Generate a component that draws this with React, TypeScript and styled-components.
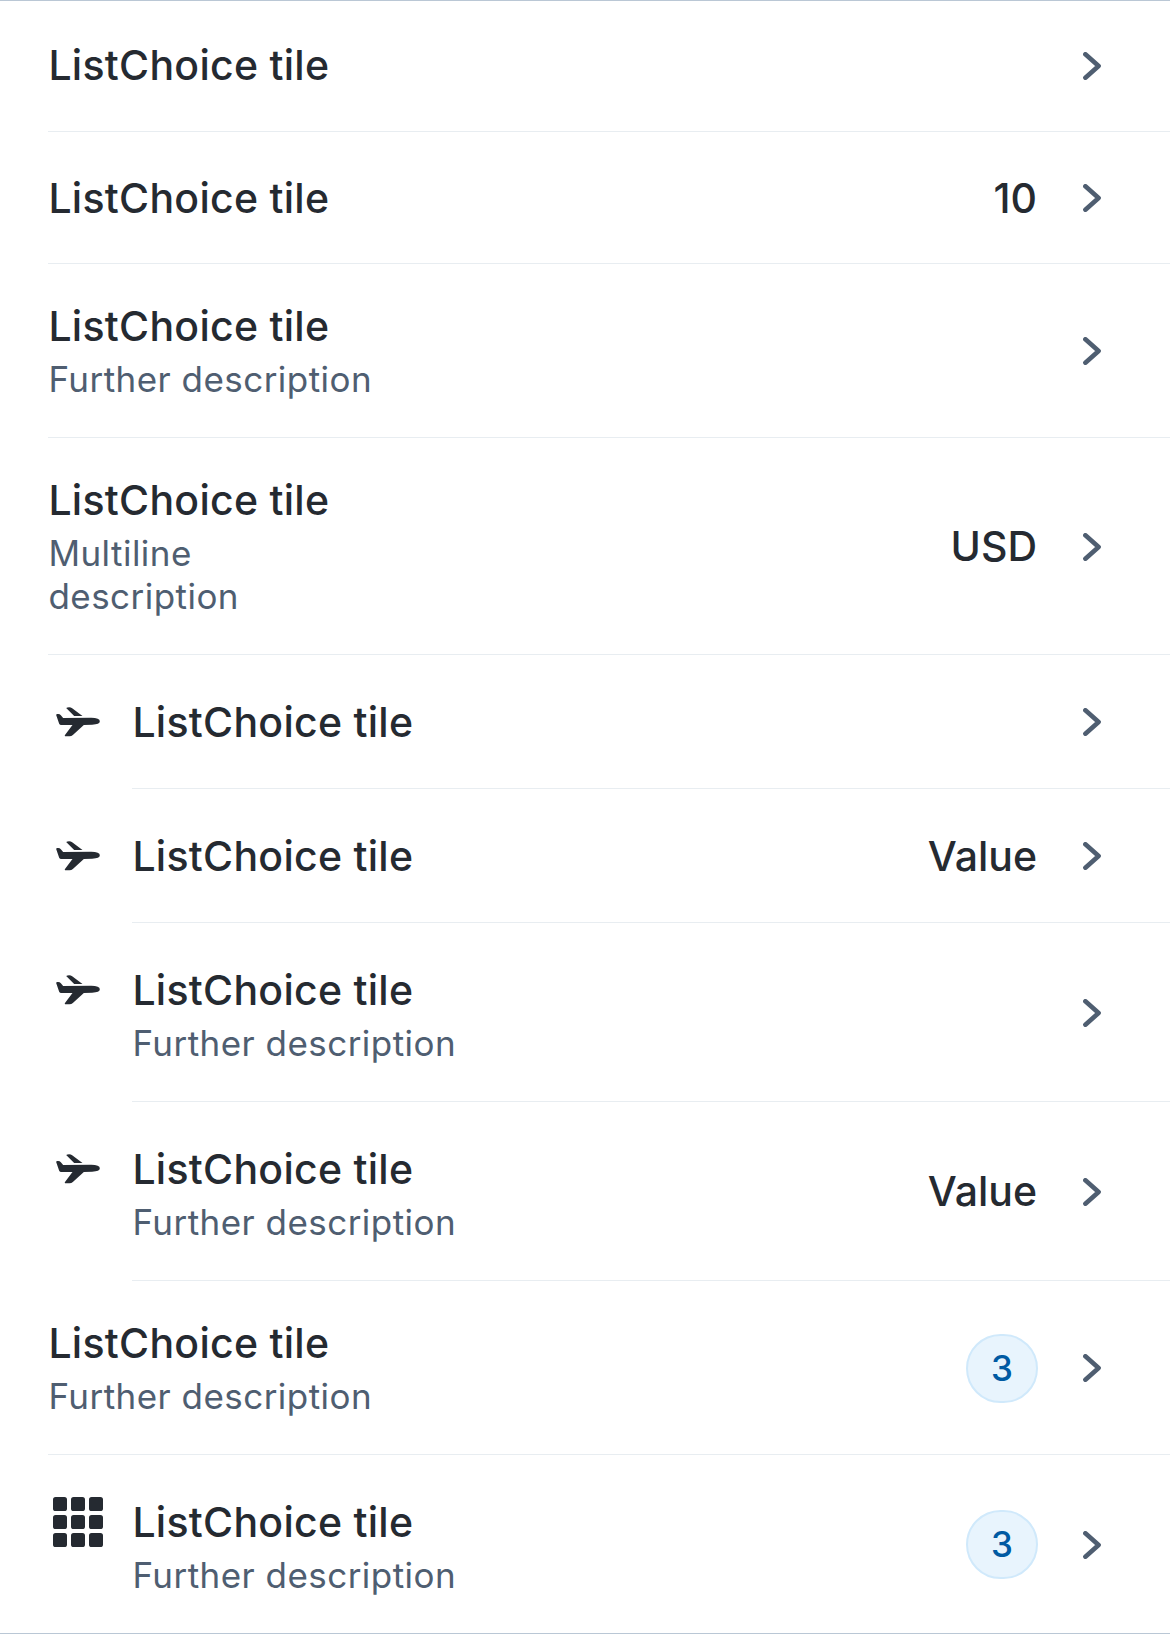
import React from 'react';
import styled, { createGlobalStyle } from 'styled-components';

const GlobalStyle = createGlobalStyle`
  * { box-sizing: border-box; }
  body { margin: 0; background: #fff; font-family: Inter, "Liberation Sans", sans-serif; }
`;

const List = styled.ul`
  list-style: none;
  margin: 0;
  padding: 0;
  width: 1170px;
  height: 1634px;
  border-top: 1px solid #bac7d5;
  border-bottom: 1px solid #bac7d5;
  background: #fff;
`;

const Tile = styled.li<{ $height: number }>`
  display: flex;
  height: ${p => p.$height}px;
  padding-left: 48px;
`;

const Leading = styled.div<{ $top: number }>`
  flex: none;
  width: 84px;
  padding: ${p => p.$top}px 0 0 5px;
  color: #252a31;
  svg { display: block; }
`;

const Body = styled.div<{ $divider: boolean }>`
  flex: 1;
  display: flex;
  justify-content: space-between;
  border-bottom: ${p => (p.$divider ? '1px solid #e8edf1' : 'none')};
`;

const Texts = styled.div<{ $top: number }>`
  padding-top: ${p => p.$top}px;
  padding-left: 0.4px;
`;

const Title = styled.div`
  height: 50px;
  font-size: 41px;
  line-height: 50px;
  font-weight: 500;
  letter-spacing: 0.28px;
  color: #252a31;
  white-space: nowrap;
`;

const Description = styled.div`
  padding-top: 7px;
  font-size: 35px;
  line-height: 43px;
  letter-spacing: 0.46px;
  color: #4f5e71;
  white-space: pre-line;
`;

const Trailing = styled.div<{ $shift: number }>`
  display: flex;
  align-items: center;
  gap: 45px;
  padding-top: ${p => p.$shift}px;
  padding-right: 69px;
`;

const Value = styled(Title)<{ $raised: boolean }>`
  margin-bottom: ${p => (p.$raised ? 2 : 0)}px;
  padding-right: 1px;
  letter-spacing: 0;
`;

const Badge = styled.span`
  display: flex;
  align-items: center;
  justify-content: center;
  width: 72px;
  height: 69px;
  border: 2px solid #d0e9fb;
  border-radius: 35px;
  background: #e8f4fd;
  color: #005aa3;
  font-size: 35px;
  line-height: 43px;
  font-weight: 500;
`;

const Chevron = () => (
  <svg width="18" height="28" viewBox="0 0 18 28" fill="none" stroke="#4f5e71" strokeWidth="4.6" strokeLinecap="round" strokeLinejoin="round">
    <path d="M2.4 2.3L15.6 14L2.4 25.7" />
  </svg>
);

const Plane = () => (
  <svg width="50" height="30" viewBox="-9.5 0 150 90" fill="currentColor">
    <path d="M30 3Q33 1 39 1Q44 1 48 4L79 27L54 27Z" />
    <path d="M0 24Q0 20 6 21Q11 21 14 25L21 33L105 32Q131 32 131 43Q131 53 108 53L83 54L50 84Q46 88 40 88L27 88Q24 87 27 83L49 54L15 54Q11 54 9 50Z" />
  </svg>
);

const Grid = () => (
  <svg width="50" height="50" viewBox="0 0 50 50" fill="currentColor">
    {[0, 18, 36].map(y => [0, 18, 36].map(x => <rect key={`${x}-${y}`} x={x} y={y} width="14" height="14" rx="2.6" />))}
  </svg>
);

interface TileData {
  height: number;
  top: number;
  shift: number;
  icon?: 'plane' | 'grid';
  description?: string;
  value?: string;
  badge?: string;
}

const tiles: TileData[] = [
  { height: 131, top: 39, shift: 0 },
  { height: 132, top: 41, shift: 1, value: '10' },
  { height: 174, top: 37, shift: 1, description: 'Further description' },
  { height: 217, top: 37, shift: 2, description: 'Multiline\ndescription', value: 'USD' },
  { height: 134, top: 42, shift: 1, icon: 'plane' },
  { height: 134, top: 42, shift: 1, icon: 'plane', value: 'Value' },
  { height: 179, top: 42, shift: 2, icon: 'plane', description: 'Further description' },
  { height: 179, top: 42, shift: 2, icon: 'plane', description: 'Further description', value: 'Value' },
  { height: 174, top: 37, shift: 1, description: 'Further description', badge: '3' },
  { height: 178, top: 42, shift: 1, icon: 'grid', description: 'Further description', badge: '3' },
];

export default function App() {
  return (
    <>
      <GlobalStyle />
      <List>
        {tiles.map((t, i) => (
          <Tile key={i} $height={t.height}>
            {t.icon && <Leading $top={t.icon === 'plane' ? 52 : 42}>{t.icon === 'plane' ? <Plane /> : <Grid />}</Leading>}
            <Body $divider={i < tiles.length - 1}>
              <Texts $top={t.top}>
                <Title>ListChoice tile</Title>
                {t.description && <Description>{t.description}</Description>}
              </Texts>
              <Trailing $shift={t.shift}>
                {t.value && <Value $raised={!!t.description}>{t.value}</Value>}
                {t.badge && <Badge>{t.badge}</Badge>}
                <Chevron />
              </Trailing>
            </Body>
          </Tile>
        ))}
      </List>
    </>
  );
}
